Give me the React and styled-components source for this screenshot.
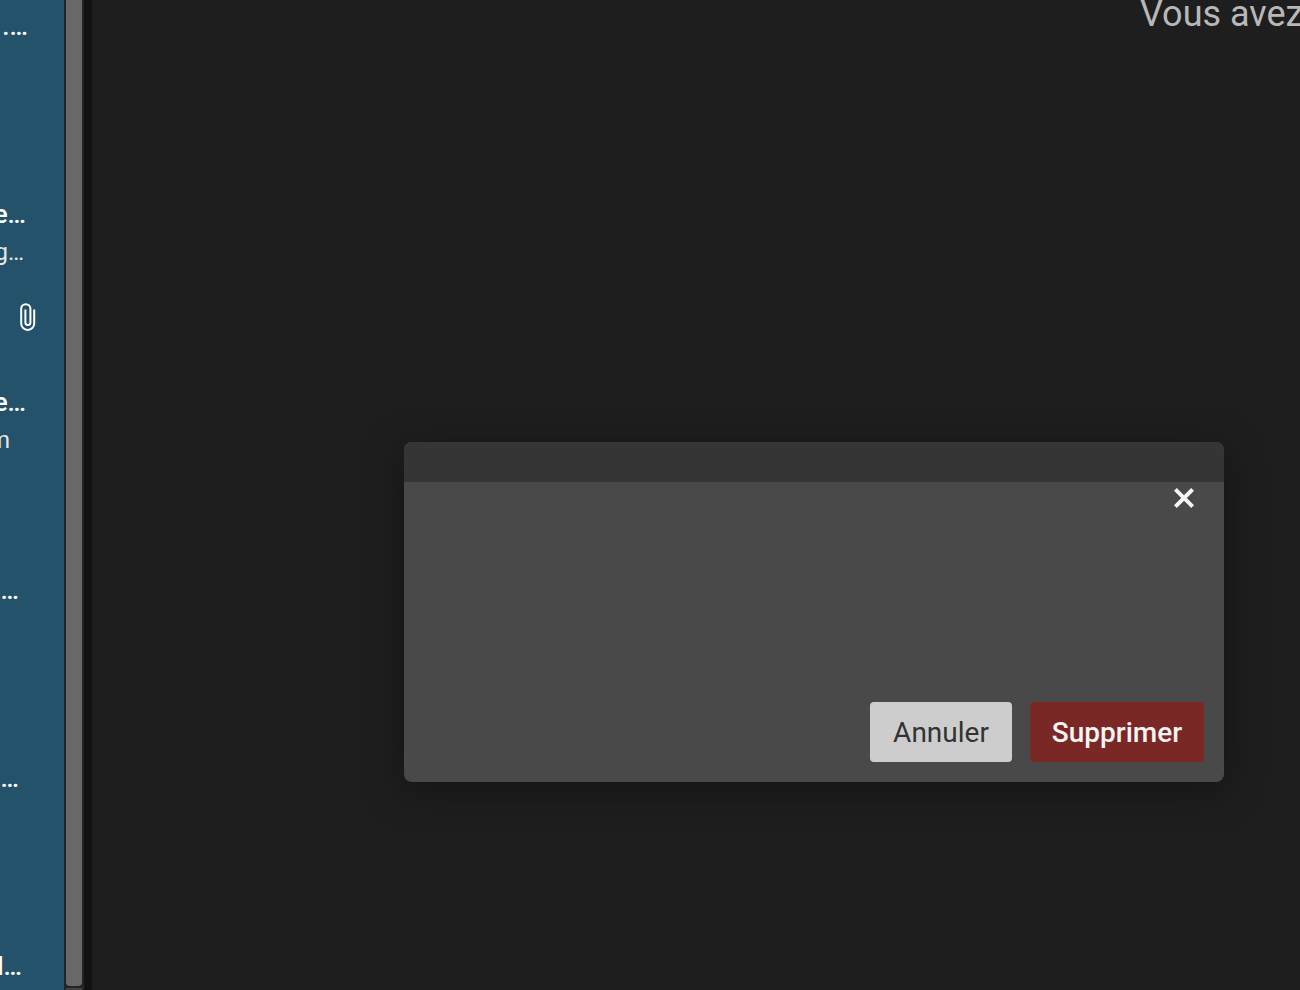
import styled, { createGlobalStyle } from 'styled-components';

const messages = [
	{ id: 1, subject: '.…', end: 36 },
	{ id: 2, subject: 'e…', preview: 'g…', end: 38 },
	{ id: 3, subject: 'e…', preview: 'm', end: 38, previewEnd: 54, attachment: true },
	{ id: 4, subject: '…', end: 45 },
	{ id: 5, subject: '…', end: 45 },
	{ id: 6, subject: 'l…', end: 42 },
];

function PaperclipIcon() {
	return (
		<svg width='16' height='28' viewBox='0 0 16 28' fill='none' aria-label='Pièce jointe'>
			<path
				d='M14.2 6.5V20.5A6.5 6.4 0 0 1 1.2 20.5V5.6A4.6 4.4 0 0 1 10.4 5.6V19.4A2.4 2.4 0 0 1 5.4 19.4V6.5'
				stroke='#fff'
				strokeWidth='2'
			/>
		</svg>
	);
}

function CloseIcon() {
	return (
		<svg width='24' height='24' viewBox='0 0 24 24' aria-hidden='true'>
			<path
				d='M4 4L20 20M20 4L4 20'
				stroke='#f4f4f4'
				strokeWidth='4.4'
				strokeLinecap='square'
				strokeLinejoin='round'
				transform='translate(1.2 1.2) scale(0.9)'
			/>
		</svg>
	);
}

function App() {
	return (
		<>
			<GlobalStyle />
			<Page>
				<MessageList>
					{messages.map((message) => (
						<MessageRow key={message.id}>
							<RowMeta>{message.attachment && <PaperclipIcon />}</RowMeta>
							<Subject $end={message.end}>{message.subject}</Subject>
							<Preview $end={message.previewEnd || 40}>{message.preview}</Preview>
						</MessageRow>
					))}
				</MessageList>

				<ScrollTrack>
					<ScrollThumb />
					<ScrollRest />
				</ScrollTrack>
				<Splitter />

				<Content>
					<Notice>Vous avez</Notice>
				</Content>

				<Overlay>
					<Dialog role='dialog' aria-modal='true' aria-label='Supprimer'>
						<DialogHeader />
						<DialogBody>
							<CloseButton type='button' aria-label='Fermer'>
								<CloseIcon />
							</CloseButton>
						</DialogBody>
						<DialogFooter>
							<CancelButton type='button'>Annuler</CancelButton>
							<DeleteButton type='button'>Supprimer</DeleteButton>
						</DialogFooter>
					</Dialog>
				</Overlay>
			</Page>
		</>
	);
}

const GlobalStyle = createGlobalStyle`
	* {
		box-sizing: border-box;
	}

	body {
		margin: 0;
		background-color: #1e1e1e;
		font-family: Roboto, sans-serif;
	}
`;

const Page = styled.div`
	position: relative;
	display: flex;
	height: 100vh;
	overflow: hidden;
`;

const MessageList = styled.ul`
	flex: none;
	width: 64px;
	margin: -96px 0 0;
	padding: 0;
	list-style: none;
	overflow: hidden;
	background-color: #24526b;
	color: #fff;
`;

const MessageRow = styled.li`
	height: 188px;
	padding-top: 20px;
`;

const RowMeta = styled.div`
	display: flex;
	align-items: center;
	justify-content: flex-end;
	height: 32px;
	margin-bottom: 51px;
	padding: 2px 28px 0 0;
`;

// Text is aligned on its right side, the start runs out of the pane
const RowLine = styled.div`
	display: flex;
	justify-content: flex-end;
	height: 38px;
	padding-right: ${({ $end }) => $end}px;
	line-height: 38px;
	white-space: nowrap;
`;

const Subject = styled(RowLine)`
	font-size: 26px;
	font-weight: 500;
`;

const Preview = styled(RowLine)`
	font-size: 24px;
	color: #e6e6e6;
`;

const ScrollTrack = styled.div`
	display: flex;
	flex: none;
	flex-direction: column;
	gap: 2px;
	width: 20px;
	padding: 0 2px;
	background-color: #242424;
`;

const ScrollThumb = styled.div`
	flex: 1;
	border-radius: 0 0 4px 4px;
	background-color: #686868;
`;

const ScrollRest = styled.div`
	height: 2px;
	background-color: #444;
`;

const Splitter = styled.div`
	flex: none;
	width: 8px;
	background-color: #121212;
`;

const Content = styled.main`
	display: flex;
	flex: 1;
	justify-content: flex-end;
	min-width: 0;
	overflow: hidden;
	background-color: #1e1e1e;
`;

const Notice = styled.p`
	flex: none;
	width: 160px;
	margin: -8px 0 0;
	font-size: 36px;
	line-height: 44px;
	white-space: nowrap;
	color: #b8b8b8;
`;

const Overlay = styled.div`
	position: absolute;
	inset: 0;
	display: flex;
	align-items: flex-start;
	justify-content: flex-end;
	padding: 442px 76px 0 92px;
`;

const Dialog = styled.section`
	display: flex;
	flex-direction: column;
	width: 100%;
	max-width: 820px;
	border-radius: 8px;
	background-color: #494949;
	box-shadow: 0 8px 40px rgba(0, 0, 0, 0.36);
	overflow: hidden;
`;

const DialogHeader = styled.header`
	height: 40px;
	background-color: #353535;
`;

const DialogBody = styled.div`
	display: flex;
	align-items: flex-start;
	justify-content: flex-end;
	min-height: 220px;
	padding: 4px 28px;
`;

const CloseButton = styled.button`
	display: flex;
	padding: 0;
	border: none;
	background: none;
	cursor: pointer;
`;

const DialogFooter = styled.footer`
	display: flex;
	justify-content: flex-end;
	gap: 18px;
	padding: 0 20px 20px;
`;

const DialogButton = styled.button`
	height: 60px;
	padding: 2px 0 0;
	border: none;
	border-radius: 4px;
	font-family: inherit;
	font-size: 28px;
	line-height: 32px;
	cursor: pointer;
`;

const CancelButton = styled(DialogButton)`
	width: 142px;
	background-color: #cdcdcd;
	color: #333;
`;

const DeleteButton = styled(DialogButton)`
	width: 174px;
	background-color: #7a2826;
	font-weight: 500;
	color: #f4f4f4;
`;

export default App;
